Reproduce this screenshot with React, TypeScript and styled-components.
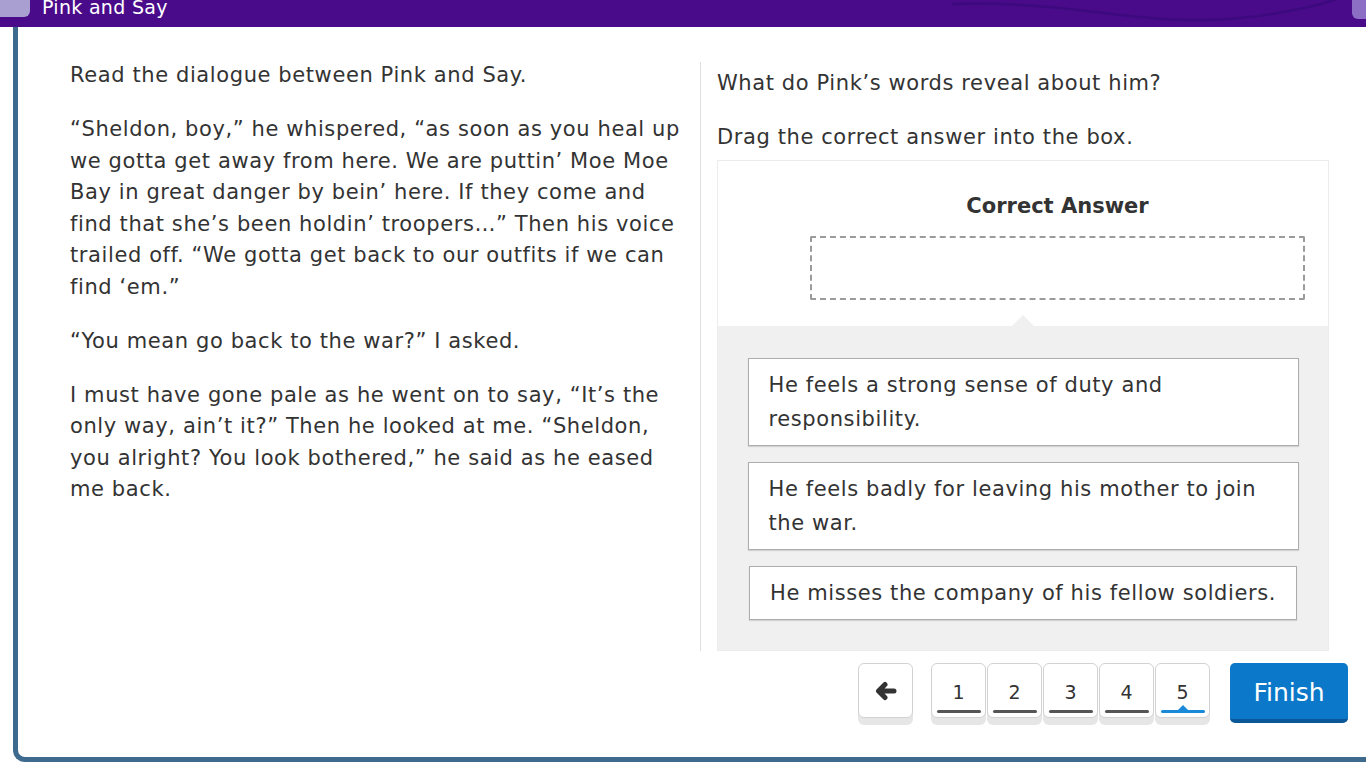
import { FC } from 'react';
import styled, { createGlobalStyle } from 'styled-components';

const GlobalStyle = createGlobalStyle`
   * {
      box-sizing: border-box;
   }
   body {
      margin: 0;
      background: #fff;
      font-family: 'DejaVu Sans', 'Open Sans', sans-serif;
      color: #333;
      overflow: hidden;
   }
`;

const Header = styled.header`
   position: relative;
   height: 27px;
   background: #4a0b8b;
   display: flex;
   align-items: flex-start;
   overflow: hidden;
`;

const Tab = styled.div<{ side: 'left' | 'right' }>`
   width: ${(p) => (p.side === 'left' ? '30px' : '14px')};
   height: ${(p) => (p.side === 'left' ? '17px' : '19px')};
   background: ${(p) => (p.side === 'left' ? '#aa9fd1' : '#8c6fc5')};
   border-radius: ${(p) => (p.side === 'left' ? '0 0 6px 0' : '0 0 0 6px')};
   flex-shrink: 0;
   margin-left: ${(p) => (p.side === 'right' ? 'auto' : '0')};
`;

const HeaderTitle = styled.h1`
   margin: 0 0 0 12px;
   font-size: 19px;
   font-weight: 500;
   line-height: 15px;
   color: #fff;
   letter-spacing: 0.3px;
   white-space: nowrap;
`;

const Wave = styled.svg`
   position: absolute;
   top: 0;
   right: 14px;
   pointer-events: none;
`;

const Frame = styled.main`
   margin-left: 13px;
   height: 735px;
   border-left: 5px solid #3e6a8e;
   border-bottom: 5px solid #3e6a8e;
   border-bottom-left-radius: 12px;
   padding: 35px 18px 0 52px;
   display: flex;
   flex-direction: column;
`;

const Columns = styled.div`
   display: flex;
   height: 589px;
`;

const Passage = styled.section`
   width: 630px;
   padding-right: 18px;
   margin-top: -2px;
   flex-shrink: 0;
`;

const Para = styled.p`
   margin: 0 0 22.5px;
   font-size: 21px;
   line-height: 31.5px;
   letter-spacing: 0.6px;
   color: #333;
`;

const QuestionCol = styled.section`
   flex: 1;
   border-left: 1px solid #dedede;
   padding: 6px 19px 0 16px;
   display: flex;
   flex-direction: column;
`;

const Panel = styled.div`
   margin-top: -16.5px;
   border: 1px solid #ececec;
   background: #fff;
   display: flex;
   flex-direction: column;
   flex: 1;
`;

const DropArea = styled.div`
   padding: 30px 23px 26px 92px;
   display: flex;
   flex-direction: column;
`;

const DropTitle = styled.h2`
   margin: 0 0 15px;
   text-align: center;
   font-size: 21px;
   line-height: 30px;
   font-weight: 700;
   color: #333;
`;

const DropBox = styled.div`
   height: 64px;
   border: 2px dashed #9b9b9b;
   border-radius: 2px;
`;

const Tray = styled.div`
   position: relative;
   flex: 1;
   background: #f0f0f0;
   padding: 32px 0 0;
   display: flex;
   flex-direction: column;
   align-items: center;
   gap: 16px;

   &::before {
      content: '';
      position: absolute;
      top: -11px;
      left: 50%;
      margin-left: -11px;
      border-left: 11px solid transparent;
      border-right: 11px solid transparent;
      border-bottom: 11px solid #f0f0f0;
   }
`;

const Choice = styled.div`
   max-width: 551px;
   padding: 9px 20px;
   background: #fff;
   border: 1px solid #adadad;
   box-shadow: 0 1px 1px rgba(0, 0, 0, 0.12);
   font-size: 21px;
   line-height: 34px;
   letter-spacing: 0.6px;
   color: #333;
`;

const Footer = styled.nav`
   margin-top: 12px;
   display: flex;
   justify-content: flex-end;
   align-items: flex-start;
`;

const NavButton = styled.button`
   width: 55px;
   height: 55px;
   padding: 0;
   background: #fff;
   border: 1px solid #d2d2d2;
   border-radius: 6px;
   box-shadow: 0 7px 0 #e6e6e6;
   display: flex;
   align-items: center;
   justify-content: center;
   color: #333;
   cursor: pointer;
`;

const Pages = styled.div`
   display: flex;
   gap: 1px;
   margin: 0 20px 0 18px;
`;

const PageButton = styled(NavButton)`
   flex-direction: column;
   justify-content: flex-start;
   padding-top: 17px;
   font-family: 'DejaVu Sans', sans-serif;
   font-size: 19px;
   line-height: 22px;
`;

const Underline = styled.span<{ active: boolean }>`
   position: relative;
   margin-top: 7px;
   width: 44px;
   height: 3px;
   border-radius: 2px;
   background: ${(p) => (p.active ? '#1a8ad8' : '#555')};

   &::after {
      content: '';
      display: ${(p) => (p.active ? 'block' : 'none')};
      position: absolute;
      left: 50%;
      top: -5px;
      margin-left: -5px;
      border-left: 5px solid transparent;
      border-right: 5px solid transparent;
      border-bottom: 5px solid #1a8ad8;
   }
`;

const FinishButton = styled.button`
   width: 118px;
   height: 60px;
   background: #0b78c9;
   border: none;
   border-bottom: 4px solid #0a5897;
   border-radius: 5px;
   color: #fff;
   font-family: 'DejaVu Sans', sans-serif;
   font-size: 25px;
   font-weight: 500;
   padding: 2px 0 0;
   cursor: pointer;
`;

const ArrowLeft: FC = () => (
   <svg width="22" height="20" viewBox="0 0 22 20" aria-hidden="true">
      <path
         d="M10 3.5 L3.5 10 L10 16.5 M4 10 H19"
         fill="none"
         stroke="#333"
         strokeWidth="5"
         strokeLinecap="round"
         strokeLinejoin="round"
      />
   </svg>
);

const passage = [
   'Read the dialogue between Pink and Say.',
   '\u201cSheldon, boy,\u201d he whispered, \u201cas soon as you heal up we gotta get away from here. We are puttin\u2019 Moe Moe Bay in great danger by bein\u2019 here. If they come and find that she\u2019s been holdin\u2019 troopers\u2026\u201d Then his voice trailed off. \u201cWe gotta get back to our outfits if we can find \u2018em.\u201d',
   '\u201cYou mean go back to the war?\u201d I asked.',
   'I must have gone pale as he went on to say, \u201cIt\u2019s the only way, ain\u2019t it?\u201d Then he looked at me. \u201cSheldon, you alright? You look bothered,\u201d he said as he eased me back.',
];

const choices = [
   'He feels a strong sense of duty and responsibility.',
   'He feels badly for leaving his mother to join the war.',
   'He misses the company of his fellow soldiers.',
];

const pages = [1, 2, 3, 4, 5];

const App: FC = (): JSX.Element => {
   return (
      <>
         <GlobalStyle />
         <Header>
            <Tab side="left" />
            <HeaderTitle>Pink and Say</HeaderTitle>
            <Wave width="400" height="27" viewBox="0 0 400 27">
               <path
                  d="M0 4 C 60 2, 110 8, 160 14 S 260 24, 320 14 S 370 2, 390 -2"
                  fill="none"
                  stroke="#3c0a7e"
                  strokeWidth="2.5"
               />
            </Wave>
            <Tab side="right" />
         </Header>
         <Frame>
            <Columns>
               <Passage>
                  {passage.map((text) => (
                     <Para key={text}>{text}</Para>
                  ))}
               </Passage>
               <QuestionCol>
                  <Para>What do Pink&rsquo;s words reveal about him?</Para>
                  <Para>Drag the correct answer into the box.</Para>
                  <Panel>
                     <DropArea>
                        <DropTitle>Correct Answer</DropTitle>
                        <DropBox />
                     </DropArea>
                     <Tray>
                        {choices.map((choice) => (
                           <Choice key={choice}>{choice}</Choice>
                        ))}
                     </Tray>
                  </Panel>
               </QuestionCol>
            </Columns>
            <Footer>
               <NavButton aria-label="Previous">
                  <ArrowLeft />
               </NavButton>
               <Pages>
                  {pages.map((n) => (
                     <PageButton key={n}>
                        {n}
                        <Underline active={n === 5} />
                     </PageButton>
                  ))}
               </Pages>
               <FinishButton>Finish</FinishButton>
            </Footer>
         </Frame>
      </>
   );
};

export default App;
